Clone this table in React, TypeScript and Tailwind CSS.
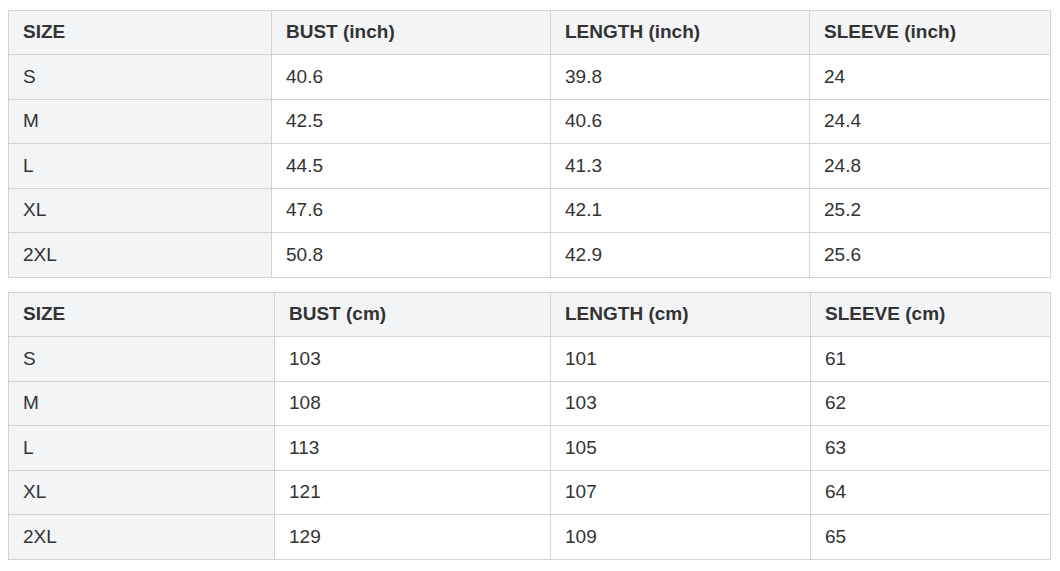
import React from "react";

type Table = {
  unit: string;
  cols: string[];
  rows: string[][];
};

const tables: Table[] = [
  {
    unit: "inch",
    cols: ["w-[263px]", "w-[279px]", "w-[259px]", "w-[241px]"],
    rows: [
      ["S", "40.6", "39.8", "24"],
      ["M", "42.5", "40.6", "24.4"],
      ["L", "44.5", "41.3", "24.8"],
      ["XL", "47.6", "42.1", "25.2"],
      ["2XL", "50.8", "42.9", "25.6"],
    ],
  },
  {
    unit: "cm",
    cols: ["w-[266px]", "w-[276px]", "w-[260px]", "w-[240px]"],
    rows: [
      ["S", "103", "101", "61"],
      ["M", "108", "103", "62"],
      ["L", "113", "105", "63"],
      ["XL", "121", "107", "64"],
      ["2XL", "129", "109", "65"],
    ],
  },
];

function SizeTable({ t }: { t: Table }) {
  const headers = ["SIZE", `BUST (${t.unit})`, `LENGTH (${t.unit})`, `SLEEVE (${t.unit})`];
  return (
    <table className="w-[1042px] table-fixed border-collapse border border-[#d3d3d3]">
      <colgroup>
        {t.cols.map((c, i) => (
          <col key={i} className={c} />
        ))}
      </colgroup>
      <thead>
        <tr className="h-[44px] bg-[#f3f4f6]">
          {headers.map((h) => (
            <th key={h} className="border border-[#d3d3d3] px-[14px] text-left font-bold">
              {h}
            </th>
          ))}
        </tr>
      </thead>
      <tbody>
        {t.rows.map((r) => (
          <tr key={r[0]} className="h-[44.6px]">
            {r.map((v, i) => (
              <td
                key={i}
                className={`border border-[#d3d3d3] px-[14px] ${i === 0 ? "bg-[#f3f4f6]" : "bg-white"}`}
              >
                {v}
              </td>
            ))}
          </tr>
        ))}
      </tbody>
    </table>
  );
}

export default function App() {
  return (
    <div className="min-h-[571px] bg-white pl-2 pt-[10px] font-['Liberation_Sans',Arial,sans-serif] text-[19px] text-[#333]">
      <div className="flex flex-col gap-[14px]">
        {tables.map((t) => (
          <SizeTable key={t.unit} t={t} />
        ))}
      </div>
    </div>
  );
}
